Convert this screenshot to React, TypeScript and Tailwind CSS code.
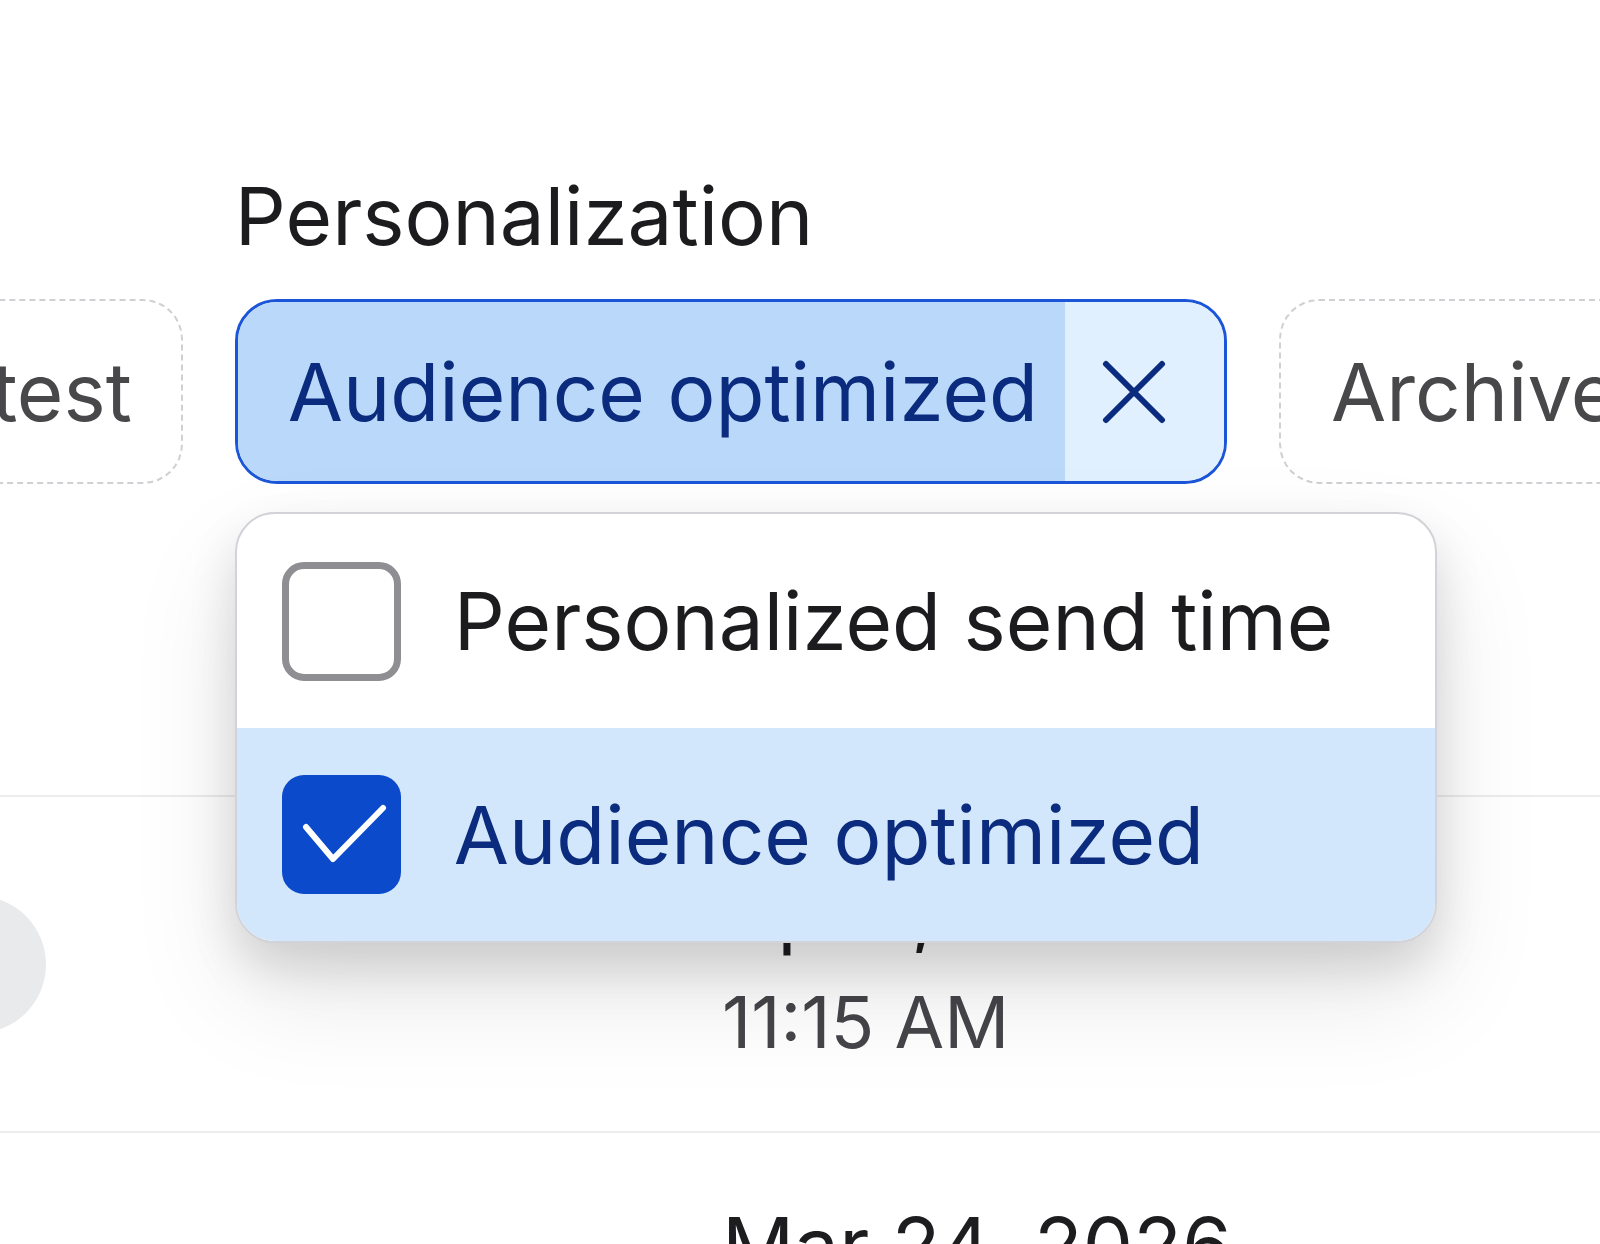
const options = [
  { label: "Personalized send time", checked: false },
  { label: "Audience optimized", checked: true },
];

function DashedChip({ label }: { label: string }) {
  return (
    <div className="flex h-[185px] shrink-0 items-center whitespace-nowrap rounded-[40px] border-2 border-dashed border-[#cfd0d4] pl-[50px] pr-[49px] text-[80px] leading-none text-[#48484a]">
      {label}
    </div>
  );
}

function Checkbox({ checked }: { checked: boolean }) {
  if (!checked) {
    return <span className="h-[119px] w-[119px] shrink-0 rounded-[22px] border-[7px] border-[#8e8e93] bg-white" />;
  }
  return (
    <span className="h-[119px] w-[119px] shrink-0 rounded-[22px] bg-[#0b4acb]">
      <svg
        viewBox="0 0 119 119"
        className="h-[119px] w-[119px]"
        fill="none"
        stroke="white"
        strokeWidth={6}
        strokeLinecap="round"
        strokeLinejoin="round"
      >
        <path d="M24 52 L51 84 L101 33" />
      </svg>
    </span>
  );
}

function DateCell({ date, time, className }: { date: string; time: string; className: string }) {
  return (
    <div className={`${className} whitespace-nowrap leading-none`}>
      <div className="text-[80px] text-[#1d1d1f]">{date}</div>
      <div className="mt-[36px] text-[72px] text-[#45454a]">{time}</div>
    </div>
  );
}

export default function App() {
  return (
    <div className="relative h-[1244px] w-[1600px] overflow-hidden bg-white font-['Inter',sans-serif] text-[#1c1c1e]">
      {/* Filter chips */}
      <div className="ml-[-221px] flex items-end gap-[52px] pt-[176px]">
        <DashedChip label="A/B test" />

        <div className="relative flex shrink-0 flex-col">
          <span className="mb-[43px] text-[80px] leading-none">Personalization</span>
          <div className="flex h-[185px] overflow-hidden rounded-[42px] border-[3px] border-[#1b55d8]">
            <span className="flex items-center whitespace-nowrap bg-[#bad9fa] pl-[50px] pr-[27px] text-[80px] leading-none text-[#0a2b7e]">
              Audience optimized
            </span>
            <button type="button" className="flex items-center bg-[#e0f0fe] pl-[37px] pr-[58px] text-[#0a2b7e]">
              <svg
                viewBox="0 0 64 64"
                className="h-[64px] w-[64px]"
                fill="none"
                stroke="currentColor"
                strokeWidth={6}
                strokeLinecap="round"
              >
                <path d="M4 4 L60 60 M60 4 L4 60" />
              </svg>
            </button>
          </div>

          {/* Options menu */}
          <div className="absolute left-0 top-[calc(100%+28px)] z-10 w-[1202px] overflow-hidden rounded-[40px] border-2 border-[#d1d3d8] bg-white shadow-[0_24px_48px_rgba(0,0,0,0.13),0_50px_110px_rgba(0,0,0,0.1)]">
            {options.map((opt) => (
              <div
                key={opt.label}
                className={
                  opt.checked
                    ? "flex h-[213px] items-center gap-[53px] bg-[#d3e7fc] pl-[45px] text-[80px] leading-none text-[#0a2b7e]"
                    : "flex h-[214px] items-center gap-[53px] pl-[45px] text-[80px] leading-none text-[#1c1c1e]"
                }
              >
                <Checkbox checked={opt.checked} />
                <span className="whitespace-nowrap">{opt.label}</span>
              </div>
            ))}
          </div>
        </div>

        <DashedChip label="Archived" />
      </div>

      {/* Campaign rows */}
      <div className="mt-[311px]">
        <div className="flex h-[336px] items-center border-t-2 border-[#ececef]">
          <span className="ml-[-91px] h-[137px] w-[137px] shrink-0 rounded-full bg-[#e9eaec]" />
          <DateCell className="ml-[676px]" date="Apr 1, 2026" time="11:15 AM" />
        </div>
        <div className="flex h-[336px] items-center border-t-2 border-[#ececef]">
          <DateCell className="ml-[722px]" date="Mar 24, 2026" time="9:30 AM" />
        </div>
      </div>
    </div>
  );
}
